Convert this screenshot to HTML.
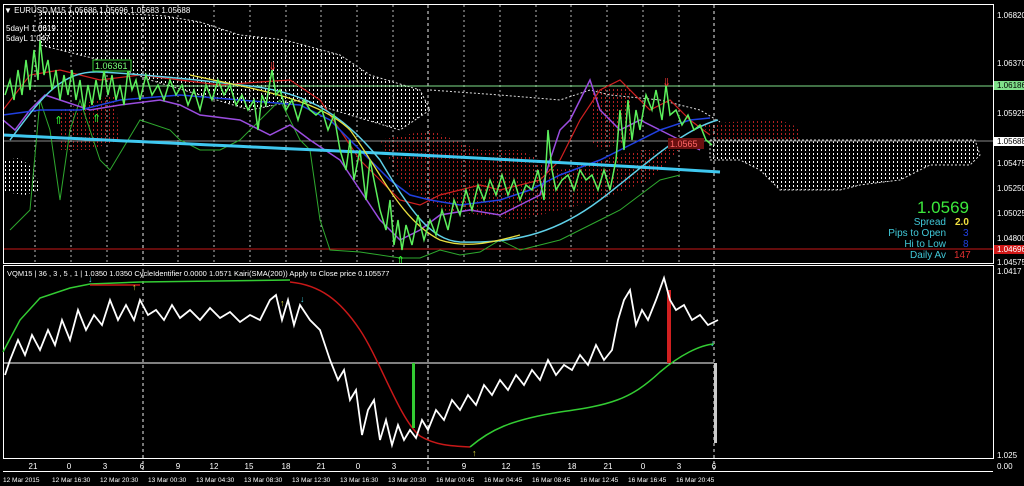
<!DOCTYPE html>
<html><head><meta charset="utf-8"><style>
html,body{margin:0;padding:0;background:#000;width:1024px;height:486px;overflow:hidden}
svg{display:block}
text{font-family:"Liberation Sans",sans-serif}
</style></head><body>
<svg width="1024" height="486" viewBox="0 0 1024 486" xmlns="http://www.w3.org/2000/svg">
<defs>
<pattern id="wd" width="4" height="4" patternUnits="userSpaceOnUse"><rect x="1" y="1" width="1" height="2" fill="#fff"/></pattern>
<pattern id="rd" width="4" height="4" patternUnits="userSpaceOnUse"><rect x="1" y="1" width="1" height="2" fill="#b02020"/></pattern>
</defs>
<rect width="1024" height="486" fill="#000"/>
<!-- clouds -->
<path d="M40,12 L100,12 L165,16 L200,22 L240,35 L285,40 L340,55 L370,75 L420,90 L430,110 L400,130 L350,115 L300,100 L250,110 L200,95 L150,80 L100,60 L60,50 L40,45 Z" fill="url(#wd)" stroke="#ddd" stroke-dasharray="2 2" stroke-width="1"/>
<path d="M3,160 L20,158 L35,170 L40,190 L25,195 L3,192 Z" fill="url(#wd)"/>
<path d="M60,110 L115,95 L120,140 L90,150 L60,150 Z" fill="url(#rd)"/>
<path d="M380,140 L430,130 L480,150 L520,150 L560,170 L600,160 L640,150 L680,150 L650,180 L600,200 L560,210 L520,220 L480,215 L440,210 L400,180 Z" fill="url(#rd)"/>
<path d="M590,90 L630,88 L630,140 L600,150 L590,140 Z" fill="url(#rd)"/>
<path d="M700,125 L730,122 L780,120 L800,128 L798,140 L720,142 Z" fill="url(#rd)"/>
<path d="M710,140 L975,140 L980,155 L970,165 L930,165 L900,180 L860,185 L840,190 L780,190 L760,170 L740,160 L710,160 Z" fill="url(#wd)" stroke="#ddd" stroke-dasharray="2 2"/>
<path d="M430,90 L500,95 L560,100 L590,90 L610,95 L660,100 L700,110 L720,122" fill="none" stroke="#ddd" stroke-dasharray="2 2"/>
<!-- vertical grid -->
<g stroke="#bbb" stroke-dasharray="2 3" stroke-width="1">
<line x1="35" y1="5" x2="35" y2="262"/><line x1="71" y1="5" x2="71" y2="262"/><line x1="107" y1="5" x2="107" y2="262"/>
<line x1="178" y1="5" x2="178" y2="262"/><line x1="214" y1="5" x2="214" y2="262"/><line x1="250" y1="5" x2="250" y2="262"/>
<line x1="286" y1="5" x2="286" y2="262"/><line x1="321" y1="5" x2="321" y2="262"/><line x1="357" y1="5" x2="357" y2="262"/>
<line x1="393" y1="5" x2="393" y2="262"/><line x1="464" y1="5" x2="464" y2="262"/><line x1="500" y1="5" x2="500" y2="262"/>
<line x1="536" y1="5" x2="536" y2="262"/><line x1="571" y1="5" x2="571" y2="262"/><line x1="607" y1="5" x2="607" y2="262"/>
<line x1="643" y1="5" x2="643" y2="262"/><line x1="679" y1="5" x2="679" y2="262"/>
</g>
<g stroke="#eee" stroke-dasharray="3 3" stroke-width="1">
<line x1="143" y1="5" x2="143" y2="470"/><line x1="428" y1="5" x2="428" y2="470"/><line x1="714" y1="5" x2="714" y2="470"/>
</g>
<!-- horizontal lines -->
<line x1="3" y1="86" x2="993" y2="86" stroke="#7fe08a"/>
<line x1="3" y1="141" x2="993" y2="141" stroke="#888"/>
<line x1="3" y1="249" x2="993" y2="249" stroke="#c81818"/>
<!-- indicator lines -->
<polyline points="10,230 30,210 40,100 50,130 60,200 70,130 80,100 100,160 110,170 140,120 170,130 180,140 200,150 220,150 240,140 260,120 280,100 300,140 310,150 320,220 330,250 360,252 400,258 420,258 440,250 460,255 480,252 500,240 520,250 540,245 560,240 580,230 600,220 620,210 640,195 660,180 680,175" fill="none" stroke="#2ea82e" stroke-width="1"/>
<polyline points="3,100 15,110 30,90 45,75 60,80 90,90 120,85 160,80 180,85 200,95 240,100 270,115 290,105 310,120 340,140 360,170 380,200 390,210 400,220 420,210 440,195 470,190 500,195 520,185 540,175 550,140 560,110 570,100 580,80 590,60 600,90 620,110 640,100 660,110 680,120 700,130" fill="none" stroke="#9b4de0" stroke-width="1.5" transform="translate(0,20)"/>
<polyline points="3,110 30,75 60,70 100,80 140,75 180,80 220,85 260,82 290,80 320,100 340,130 360,160 380,180 400,200 420,205 440,195 460,190 480,185 500,190 540,180 560,160 580,120 600,90 620,80 650,110 670,100 690,120 710,135" fill="none" stroke="#d02020" stroke-width="1.2"/>
<polyline points="3,115 40,110 80,110 120,100 180,95 240,100 300,105 330,120 350,140 370,160 390,180 410,195 430,200 460,205 500,200 530,190 560,175 600,160 630,145 660,130 690,120 710,118" fill="none" stroke="#2040e0" stroke-width="1.5"/>
<path d="M3,135 C200,145 450,155 720,172" fill="none" stroke="#3fc8f0" stroke-width="3"/>
<path d="M10,140 C40,100 60,70 100,72 C140,74 200,80 240,85 C300,90 340,110 380,160 C410,210 430,240 460,242 C520,244 560,230 600,200 C640,170 680,130 718,120" fill="none" stroke="#5fd0e8" stroke-width="1.5"/>
<path d="M190,75 C260,90 320,100 350,130 C380,170 400,220 440,240 C470,250 500,240 520,235" fill="none" stroke="#e8e040" stroke-width="1.3"/>
<!-- price -->
<polyline points="5,95 10,80 14,100 18,70 22,95 26,60 30,90 34,50 38,80 40,40 44,75 48,60 52,90 56,70 60,100 64,75 68,95 72,70 76,100 80,80 84,110 88,85 92,105 96,80 100,100 104,70 108,95 112,75 116,100 120,85 124,105 128,70 132,90 136,80 140,100 146,75 152,95 158,85 164,100 170,80 176,95 182,85 188,105 194,90 200,110 206,85 212,100 218,80 224,95 230,85 236,105 242,95 248,110 254,100 258,130 262,95 266,105 272,70 276,95 280,90 286,110 292,100 298,120 304,100 310,110 316,115 322,110 328,130 334,115 340,150 346,170 350,140 354,180 360,150 366,200 370,160 376,190 380,210 386,230 390,200 394,245 398,220 402,250 406,225 412,245 418,215 424,240 430,220 436,235 442,210 448,230 454,200 460,215 466,190 472,210 478,185 484,200 490,180 496,195 502,175 508,195 514,180 520,200 526,185 532,190 538,170 544,200 548,130 552,170 556,190 562,180 568,175 574,190 580,170 586,180 592,175 598,190 604,170 610,190 616,160 620,110 624,150 628,100 632,140 636,110 640,130 646,95 652,110 656,90 662,120 666,85 670,115 676,110 682,125 688,115 694,130 700,125 706,140 712,145" fill="none" stroke="#5cf05c" stroke-width="1.5"/>
<!-- markers -->
<text x="54" y="124" fill="#3f3" font-size="11">⇑</text><text x="92" y="122" fill="#3f3" font-size="11">⇑</text>
<text x="396" y="264" fill="#3f3" font-size="11">⇑</text><text x="662" y="86" fill="#e33" font-size="11">⇓</text>
<text x="268" y="70" fill="#e33" font-size="11">⇓</text>
<rect x="93" y="60" width="38" height="11" fill="#000" stroke="#3c3"/><text x="95" y="69" fill="#7f7" font-size="9">1.06361</text>
<rect x="668" y="138" width="36" height="11" fill="#6a1010"/><text x="670" y="147" fill="#f66" font-size="9">1.0565</text>
<!-- info -->
<text x="4" y="13" fill="#fff" font-size="8">▼ EURUSD,M15  1.05686 1.05696 1.05683 1.05688</text>
<text x="6" y="31" fill="#fff" font-size="8">5dayH 1.0619</text>
<text x="6" y="41" fill="#fff" font-size="8">5dayL 1.047</text>
<text x="969" y="213" fill="#3ce83c" font-size="17" text-anchor="end">1.0569</text>
<text x="946" y="225" fill="#40c8d8" font-size="10" text-anchor="end">Spread</text><text x="955" y="225" fill="#f0e040" font-size="10" font-weight="bold">2.0</text>
<text x="946" y="236" fill="#40c8d8" font-size="10" text-anchor="end">Pips to Open</text><text x="963" y="236" fill="#2040e0" font-size="10">3</text>
<text x="946" y="247" fill="#40c8d8" font-size="10" text-anchor="end">Hi to Low</text><text x="963" y="247" fill="#2040e0" font-size="10">8</text>
<text x="946" y="258" fill="#40c8d8" font-size="10" text-anchor="end">Daily Av</text><text x="954" y="258" fill="#e03030" font-size="10">147</text>
<!-- frames -->
<rect x="3.5" y="4.5" width="990" height="259" fill="none" stroke="#fff"/>
<rect x="3.5" y="265.5" width="990" height="193" fill="none" stroke="#fff"/>
<line x1="3" y1="471.5" x2="993" y2="471.5" stroke="#fff"/>
<!-- right axis -->
<g fill="#fff" font-size="8">
<text x="997" y="18">1.06820</text><text x="997" y="66">1.06370</text><text x="997" y="116">1.05925</text>
<text x="997" y="166">1.05475</text><text x="997" y="191">1.05250</text><text x="997" y="216">1.05025</text>
<text x="997" y="241">1.04800</text><text x="997" y="265">1.04575</text><text x="997" y="274">1.0417</text>
<text x="997" y="458">1.025</text><text x="997" y="469">0.00</text>
</g>
<rect x="994" y="81" width="30" height="9" fill="#7fe08a"/><text x="997" y="88" fill="#000" font-size="8">1.06186</text>
<rect x="994" y="137" width="30" height="9" fill="#fff"/><text x="997" y="144" fill="#000" font-size="8">1.05688</text>
<rect x="994" y="245" width="30" height="9" fill="#d01818"/><text x="997" y="252" fill="#fff" font-size="8">1.04696</text>
<!-- sub window -->
<text x="7" y="276" fill="#fff" font-size="7.5">VQM15 | 36 , 3 , 5 , 1 | 1.0350 1.0350 CycleIdentifier 0.0000 1.0571 Kairi(SMA(200)) Apply to Close price 0.105577</text>
<line x1="3" y1="363" x2="714" y2="363" stroke="#fff"/>
<polyline points="3,352 20,320 40,298 70,288 90,284 140,282 290,280" fill="none" stroke="#3c3" stroke-width="1.5"/>
<polyline points="90,285 140,285" fill="none" stroke="#c81818" stroke-width="1.5"/>
<path d="M290,282 C320,285 340,300 360,330 C380,360 400,420 420,436 C435,445 450,446 470,447" fill="none" stroke="#c81818" stroke-width="1.5"/>
<path d="M470,447 C490,430 510,420 560,412 C610,405 630,400 660,372 C680,355 700,345 714,344" fill="none" stroke="#3c3" stroke-width="1.5"/>
<rect x="667" y="290" width="4" height="73" fill="#d02020"/>
<rect x="412" y="363" width="3" height="65" fill="#3c3"/>
<rect x="714" y="363" width="3" height="80" fill="#ccc"/>
<polyline points="5,375 10,360 18,340 25,355 32,335 40,350 48,330 55,345 62,320 70,340 78,310 86,330 94,315 102,325 110,300 118,320 126,305 134,320 140,300 148,315 156,310 164,320 172,305 180,318 190,310 200,320 210,308 220,318 230,312 240,322 250,315 260,320 270,300 276,295 282,320 288,300 294,325 300,305 310,320 320,330 330,360 338,380 344,370 350,400 356,390 362,435 368,410 374,400 380,440 386,420 392,445 398,425 404,440 410,430 416,438 422,420 428,430 436,410 444,420 452,400 460,410 468,395 476,405 484,385 492,395 500,380 508,390 516,375 524,385 532,370 540,380 548,360 556,375 564,365 572,370 580,355 588,365 596,345 604,360 612,350 618,320 624,300 630,290 636,325 642,310 648,320 656,300 664,278 670,300 676,310 684,305 692,320 700,315 708,325 718,320" fill="none" stroke="#fff" stroke-width="1.8"/>
<text x="88" y="282" fill="#40c8d8" font-size="9">↓</text><text x="300" y="302" fill="#40c8d8" font-size="9">↓</text>
<text x="132" y="290" fill="#e0e040" font-size="9">↑</text><text x="280" y="306" fill="#e0e040" font-size="9">↑</text>
<text x="472" y="456" fill="#e0e040" font-size="9">↑</text><text x="710" y="346" fill="#40c8d8" font-size="9">↓</text>
<!-- time axis -->
<g fill="#fff" font-size="8" text-anchor="middle">
<text x="33" y="469">21</text><text x="69" y="469">0</text><text x="105" y="469">3</text><text x="142" y="469">6</text>
<text x="178" y="469">9</text><text x="214" y="469">12</text><text x="249" y="469">15</text><text x="286" y="469">18</text>
<text x="321" y="469">21</text><text x="358" y="469">0</text><text x="394" y="469">3</text><text x="464" y="469">9</text>
<text x="506" y="469">12</text><text x="536" y="469">15</text><text x="572" y="469">18</text><text x="608" y="469">21</text>
<text x="643" y="469">0</text><text x="679" y="469">3</text><text x="714" y="469">6</text>
</g>
<g fill="#fff" font-size="6.5">
<text x="3" y="482">12 Mar 2015</text><text x="52" y="482">12 Mar 16:30</text><text x="100" y="482">12 Mar 20:30</text>
<text x="148" y="482">13 Mar 00:30</text><text x="196" y="482">13 Mar 04:30</text><text x="244" y="482">13 Mar 08:30</text>
<text x="292" y="482">13 Mar 12:30</text><text x="340" y="482">13 Mar 16:30</text><text x="388" y="482">13 Mar 20:30</text>
<text x="436" y="482">16 Mar 00:45</text><text x="484" y="482">16 Mar 04:45</text><text x="532" y="482">16 Mar 08:45</text>
<text x="580" y="482">16 Mar 12:45</text><text x="628" y="482">16 Mar 16:45</text><text x="676" y="482">16 Mar 20:45</text>
</g>
</svg>
</body></html>
